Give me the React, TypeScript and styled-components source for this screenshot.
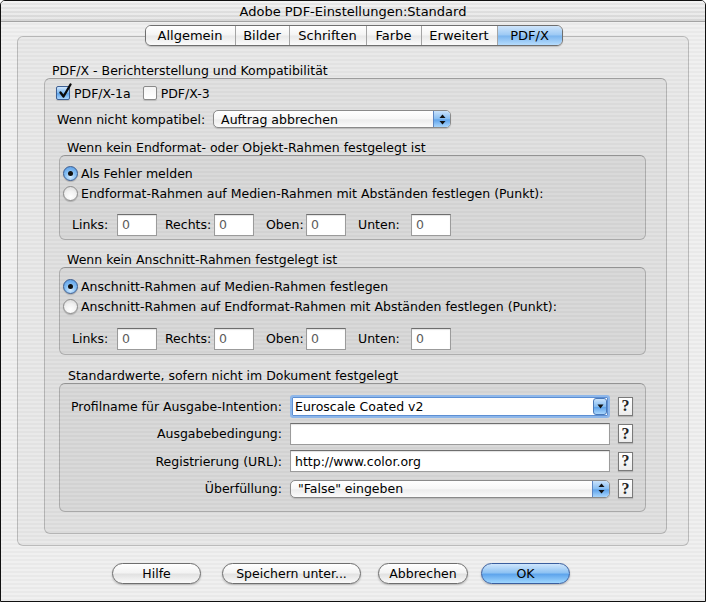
import React from "react";
import styled, { createGlobalStyle, css } from "styled-components";

const Global = createGlobalStyle`
  html, body { margin: 0; padding: 0; background: #fff; }
  body { font-family: "DejaVu Sans", "Liberation Sans", sans-serif; font-size: 12.5px; color: #000; }
  * { box-sizing: border-box; }
`;

const stripes = css`
  background-color: #ededed;
  background-image: repeating-linear-gradient(180deg, #f0f0f0 0px, #f0f0f0 2px, #e9e9e9 2px, #e9e9e9 4px);
`;

const Window = styled.div`
  width: 706px;
  height: 602px;
  border: 1px solid #111;
  border-radius: 5px 5px 0 0;
  overflow: hidden;
  display: flex;
  flex-direction: column;
  ${stripes}
`;

const TitleBar = styled.div`
  height: 21px;
  flex-shrink: 0;
  display: flex;
  align-items: center;
  justify-content: center;
  border-bottom: 1px solid #a3a3a3;
  background-image: repeating-linear-gradient(180deg, rgba(255,255,255,0.35) 0px, rgba(255,255,255,0.35) 2px, rgba(0,0,0,0.02) 2px, rgba(0,0,0,0.02) 4px),
    linear-gradient(#ededed, #d9d9d9);
  font-size: 13px;
  padding-top: 1px;
`;

const Content = styled.div`
  flex: 1;
  display: flex;
  flex-direction: column;
  padding: 3px 16px 0 16px;
`;

const TabStrip = styled.div`
  align-self: center;
  display: flex;
  position: relative;
  z-index: 1;
  margin-bottom: -10px;
  margin-left: 1px;
  border: 1px solid #6f6f6f;
  border-radius: 6px;
  overflow: hidden;
  box-shadow: 0 1px 1px rgba(0, 0, 0, 0.18);
`;

const Tab = styled.div<{ $w: number; $active?: boolean }>`
  width: ${(p) => p.$w}px;
  height: 19px;
  display: flex;
  align-items: center;
  justify-content: center;
  font-size: 13px;
  & + & { border-left: 1px solid #a4a4a4; }
  background: ${(p) =>
    p.$active
      ? "linear-gradient(#cfe5fb 0%, #9cc9f4 48%, #7bb5ee 52%, #b6dcfd 100%)"
      : "linear-gradient(#ffffff 0%, #f4f4f4 48%, #e8e8e8 52%, #fbfbfb 100%)"};
`;

const TabPanel = styled.div`
  border: 1px solid rgba(0, 0, 0, 0.2);
  border-radius: 6px;
  background: rgba(0, 0, 0, 0.028);
  padding: 26px 21px 11px 26px;
`;

const Legend = styled.div<{ $indent: number }>`
  line-height: 15px;
  height: 15px;
  padding-left: ${(p) => p.$indent}px;
`;

const Group = styled.div`
  border: 1px solid rgba(0, 0, 0, 0.2);
  border-top-color: rgba(0, 0, 0, 0.3);
  border-radius: 6px;
  background: rgba(0, 0, 0, 0.032);
  padding: 6px 20px 21px 11px;
  display: flex;
  flex-direction: column;
`;

const CheckRow = styled.div`
  display: flex;
  align-items: center;
  height: 16px;
`;

const CheckLabel = styled.label`
  display: flex;
  align-items: center;
  gap: 4px;
  margin-right: 12px;
`;

const CheckBoxBox = styled.span<{ $on?: boolean }>`
  width: 14px;
  height: 14px;
  border-radius: 2px;
  position: relative;
  flex-shrink: 0;
  border: 1px solid ${(p) => (p.$on ? "#3d5f93" : "#8a8a8a")};
  background: ${(p) =>
    p.$on
      ? "linear-gradient(#cfe6fd 0%, #7cb7f0 50%, #5da3ea 55%, #a9d5fd 100%)"
      : "linear-gradient(#f4f4f4, #ffffff)"};
  box-shadow: 0 1px 1px rgba(0, 0, 0, 0.15);
  svg { position: absolute; left: 1px; top: -4px; }
`;

const PopupRow = styled.div`
  display: flex;
  align-items: center;
  height: 18px;
  margin-top: 9px;
  padding-left: 1px;
  gap: 8px;
`;

const Popup = styled.div<{ $w: number }>`
  width: ${(p) => p.$w}px;
  height: 18px;
  border: 1px solid #8a8a8a;
  border-radius: 5px;
  display: flex;
  align-items: stretch;
  overflow: hidden;
  background: linear-gradient(#ffffff 0%, #f7f7f7 50%, #ececec 55%, #fbfbfb 100%);
  box-shadow: 0 1px 1px rgba(0, 0, 0, 0.15);
`;

const PopupText = styled.div`
  flex: 1;
  display: flex;
  align-items: center;
  padding-left: 7px;
  font-size: 12.5px;
`;

const Cap = styled.div<{ $w: number }>`
  width: ${(p) => p.$w}px;
  flex-shrink: 0;
  display: flex;
  align-items: center;
  justify-content: center;
  border-left: 1px solid #5d86c2;
  background: linear-gradient(#c9e2fb 0%, #86bdf2 50%, #5fa3ea 55%, #a9d6fd 100%);
`;

const SubLegend = styled(Legend)<{ $mt: number }>`
  margin-top: ${(p) => p.$mt}px;
  margin-left: 3px;
`;

const SubBox = styled.div<{ $pt: number; $pb: number }>`
  margin-left: 3px;
  border: 1px solid rgba(0, 0, 0, 0.2);
  border-top-color: rgba(0, 0, 0, 0.3);
  border-radius: 6px;
  background: rgba(0, 0, 0, 0.036);
  padding: ${(p) => p.$pt}px 0 ${(p) => p.$pb}px 3px;
  display: flex;
  flex-direction: column;
`;

const RadioRow = styled.label`
  display: flex;
  align-items: center;
  height: 16px;
  gap: 3px;
  & + & { margin-top: 4px; }
`;

const RadioDot = styled.span<{ $on?: boolean }>`
  width: 15px;
  height: 15px;
  border-radius: 50%;
  flex-shrink: 0;
  display: flex;
  align-items: center;
  justify-content: center;
  border: 1px solid ${(p) => (p.$on ? "#3b5c8f" : "#8c8c8c")};
  background: ${(p) =>
    p.$on
      ? "radial-gradient(circle at 50% 75%, #d7ecff 0%, #86bff3 45%, #4f95e3 100%)"
      : "radial-gradient(circle at 50% 75%, #ffffff 0%, #f1f1f1 50%, #d3d3d3 100%)"};
  box-shadow: 0 1px 1px rgba(0, 0, 0, 0.2);
  &::after {
    content: "";
    width: 5px;
    height: 5px;
    border-radius: 50%;
    background: #111;
    display: ${(p) => (p.$on ? "block" : "none")};
  }
`;

const FieldRow = styled.div<{ $mt: number }>`
  display: flex;
  align-items: center;
  height: 23px;
  margin-top: ${(p) => p.$mt}px;
  padding-left: 9px;
`;

const FieldLabel = styled.span<{ $w: number; $ml: number }>`
  width: ${(p) => p.$w}px;
  margin-left: ${(p) => p.$ml}px;
  flex-shrink: 0;
`;

const TextField = styled.div<{ $w: number; $gray?: boolean }>`
  width: ${(p) => p.$w}px;
  height: 22px;
  flex-shrink: 0;
  background: #fff;
  border: 1px solid #9b9b9b;
  border-top-color: #6e6e6e;
  box-shadow: inset 0 1px 1px rgba(0, 0, 0, 0.12);
  display: flex;
  align-items: center;
  padding-left: 4px;
  color: ${(p) => (p.$gray ? "#5c5c5c" : "#000")};
  font-size: 12.5px;
`;

const DefaultsBox = styled.div`
  margin-left: 3px;
  border: 1px solid rgba(0, 0, 0, 0.2);
  border-top-color: rgba(0, 0, 0, 0.3);
  border-radius: 6px;
  background: rgba(0, 0, 0, 0.036);
  display: grid;
  grid-template-columns: 222px 320px 15px;
  column-gap: 8px;
  grid-auto-rows: 24px;
  row-gap: 3.5px;
  padding: 10px 0 10px 0;
  align-items: center;
`;

const RowLabel = styled.div`
  text-align: right;
`;

const Combo = styled.div`
  width: 320px;
  height: 23px;
  border: 2px solid #8eb7ea;
  border-radius: 3px;
  display: flex;
  background: #fff;
  box-shadow: inset 0 0 0 1px #5d8fd3;
  padding: 1px;
`;

const ComboText = styled.div`
  flex: 1;
  display: flex;
  align-items: center;
  padding-left: 2px;
  font-size: 12.5px;
`;

const ComboCap = styled.div`
  width: 14px;
  display: flex;
  align-items: center;
  justify-content: center;
  border-radius: 3px;
  border: 1px solid #4b79b8;
  background: linear-gradient(#c9e2fb 0%, #86bdf2 50%, #5fa3ea 55%, #a9d6fd 100%);
`;

const HelpButton = styled.div`
  width: 15px;
  height: 19px;
  border: 1px solid #7a7a7a;
  background: linear-gradient(#ffffff, #ececec);
  box-shadow: 0 1px 1px rgba(0, 0, 0, 0.15);
  display: flex;
  align-items: center;
  justify-content: center;
  font-family: "Liberation Serif", "DejaVu Serif", serif;
  font-weight: bold;
  font-size: 16px;
  color: #222;
`;

const ButtonRow = styled.div`
  display: flex;
  margin: 17px 0 0 95px;
`;

const PushButton = styled.div<{ $w: number; $ml: number; $default?: boolean }>`
  width: ${(p) => p.$w}px;
  margin-left: ${(p) => p.$ml}px;
  height: 21px;
  border-radius: 11px;
  display: flex;
  align-items: center;
  justify-content: center;
  font-size: 12.5px;
  border: 1px solid ${(p) => (p.$default ? "#3a5e9e" : "#6e6e6e")};
  background: ${(p) =>
    p.$default
      ? "linear-gradient(#cfe6fc 0%, #8fc3f3 45%, #5fa5ec 55%, #9fd7ff 100%)"
      : "linear-gradient(#ffffff 0%, #f3f3f3 45%, #e2e2e2 55%, #fafafa 100%)"};
  box-shadow: 0 1px 2px rgba(0, 0, 0, 0.25);
`;

const UpDown = () => (
  <svg width="7" height="11" viewBox="0 0 7 11">
    <path d="M3.5 0.5 L6.5 4 L0.5 4 Z" fill="#111" />
    <path d="M3.5 10.5 L6.5 7 L0.5 7 Z" fill="#111" />
  </svg>
);

const Down = () => (
  <svg width="7" height="5" viewBox="0 0 7 5">
    <path d="M0.5 0.5 L6.5 0.5 L3.5 4.5 Z" fill="#111" />
  </svg>
);

const Check = () => (
  <svg width="14" height="16" viewBox="0 0 14 16">
    <path d="M2.5 9.5 L5.5 13.5 L12.5 1.5" fill="none" stroke="#0a0a0a" strokeWidth="2.3" strokeLinecap="round" strokeLinejoin="round" />
  </svg>
);

const CheckBox = ({ on, label }: { on?: boolean; label: string }) => (
  <CheckLabel>
    <CheckBoxBox $on={on}>{on && <Check />}</CheckBoxBox>
    {label}
  </CheckLabel>
);

const Radio = ({ on, label }: { on?: boolean; label: string }) => (
  <RadioRow>
    <RadioDot $on={on} />
    {label}
  </RadioRow>
);

const Margins = ({ mt }: { mt: number }) => (
  <FieldRow $mt={mt}>
    <FieldLabel $w={45} $ml={0}>Links:</FieldLabel>
    <TextField $w={40} $gray>0</TextField>
    <FieldLabel $w={49} $ml={8}>Rechts:</FieldLabel>
    <TextField $w={40} $gray>0</TextField>
    <FieldLabel $w={40} $ml={12}>Oben:</FieldLabel>
    <TextField $w={40} $gray>0</TextField>
    <FieldLabel $w={53} $ml={12}>Unten:</FieldLabel>
    <TextField $w={40} $gray>0</TextField>
  </FieldRow>
);

const tabs = [
  { t: "Allgemein", w: 89 },
  { t: "Bilder", w: 54 },
  { t: "Schriften", w: 77 },
  { t: "Farbe", w: 55 },
  { t: "Erweitert", w: 76 },
  { t: "PDF/X", w: 65, active: true },
];

export default function App() {
  return (
    <>
      <Global />
      <Window>
        <TitleBar>Adobe PDF-Einstellungen:Standard</TitleBar>
        <Content>
          <TabStrip>
            {tabs.map((x) => (
              <Tab key={x.t} $w={x.w} $active={x.active}>
                {x.t}
              </Tab>
            ))}
          </TabStrip>
          <TabPanel>
            <Legend $indent={8}>PDF/X - Berichterstellung und Kompatibilität</Legend>
            <Group>
              <CheckRow>
                <CheckBox on label="PDF/X-1a" />
                <CheckBox label="PDF/X-3" />
              </CheckRow>
              <PopupRow>
                Wenn nicht kompatibel:
                <Popup $w={238}>
                  <PopupText>Auftrag abbrechen</PopupText>
                  <Cap $w={17}>
                    <UpDown />
                  </Cap>
                </Popup>
              </PopupRow>

              <SubLegend $indent={8} $mt={12}>Wenn kein Endformat- oder Objekt-Rahmen festgelegt ist</SubLegend>
              <SubBox $pt={9} $pb={3}>
                <Radio on label="Als Fehler melden" />
                <Radio label="Endformat-Rahmen auf Medien-Rahmen mit Abständen festlegen (Punkt):" />
                <Margins mt={12} />
              </SubBox>

              <SubLegend $indent={8} $mt={12}>Wenn kein Anschnitt-Rahmen festgelegt ist</SubLegend>
              <SubBox $pt={10} $pb={4}>
                <Radio on label="Anschnitt-Rahmen auf Medien-Rahmen festlegen" />
                <Radio label="Anschnitt-Rahmen auf Endformat-Rahmen mit Abständen festlegen (Punkt):" />
                <Margins mt={13} />
              </SubBox>

              <SubLegend $indent={9} $mt={13}>Standardwerte, sofern nicht im Dokument festgelegt</SubLegend>
              <DefaultsBox>
                <RowLabel>Profilname für Ausgabe-Intention:</RowLabel>
                <Combo>
                  <ComboText>Euroscale Coated v2</ComboText>
                  <ComboCap>
                    <Down />
                  </ComboCap>
                </Combo>
                <HelpButton>?</HelpButton>

                <RowLabel>Ausgabebedingung:</RowLabel>
                <TextField $w={320} />
                <HelpButton>?</HelpButton>

                <RowLabel>Registrierung (URL):</RowLabel>
                <TextField $w={320}>http://www.color.org</TextField>
                <HelpButton>?</HelpButton>

                <RowLabel>Überfüllung:</RowLabel>
                <Popup $w={320}>
                  <PopupText>"False" eingeben</PopupText>
                  <Cap $w={17}>
                    <UpDown />
                  </Cap>
                </Popup>
                <HelpButton>?</HelpButton>
              </DefaultsBox>
            </Group>
          </TabPanel>
          <ButtonRow>
            <PushButton $w={89} $ml={0}>Hilfe</PushButton>
            <PushButton $w={139} $ml={21}>Speichern unter...</PushButton>
            <PushButton $w={90} $ml={17}>Abbrechen</PushButton>
            <PushButton $w={89} $ml={13} $default>OK</PushButton>
          </ButtonRow>
        </Content>
      </Window>
    </>
  );
}
